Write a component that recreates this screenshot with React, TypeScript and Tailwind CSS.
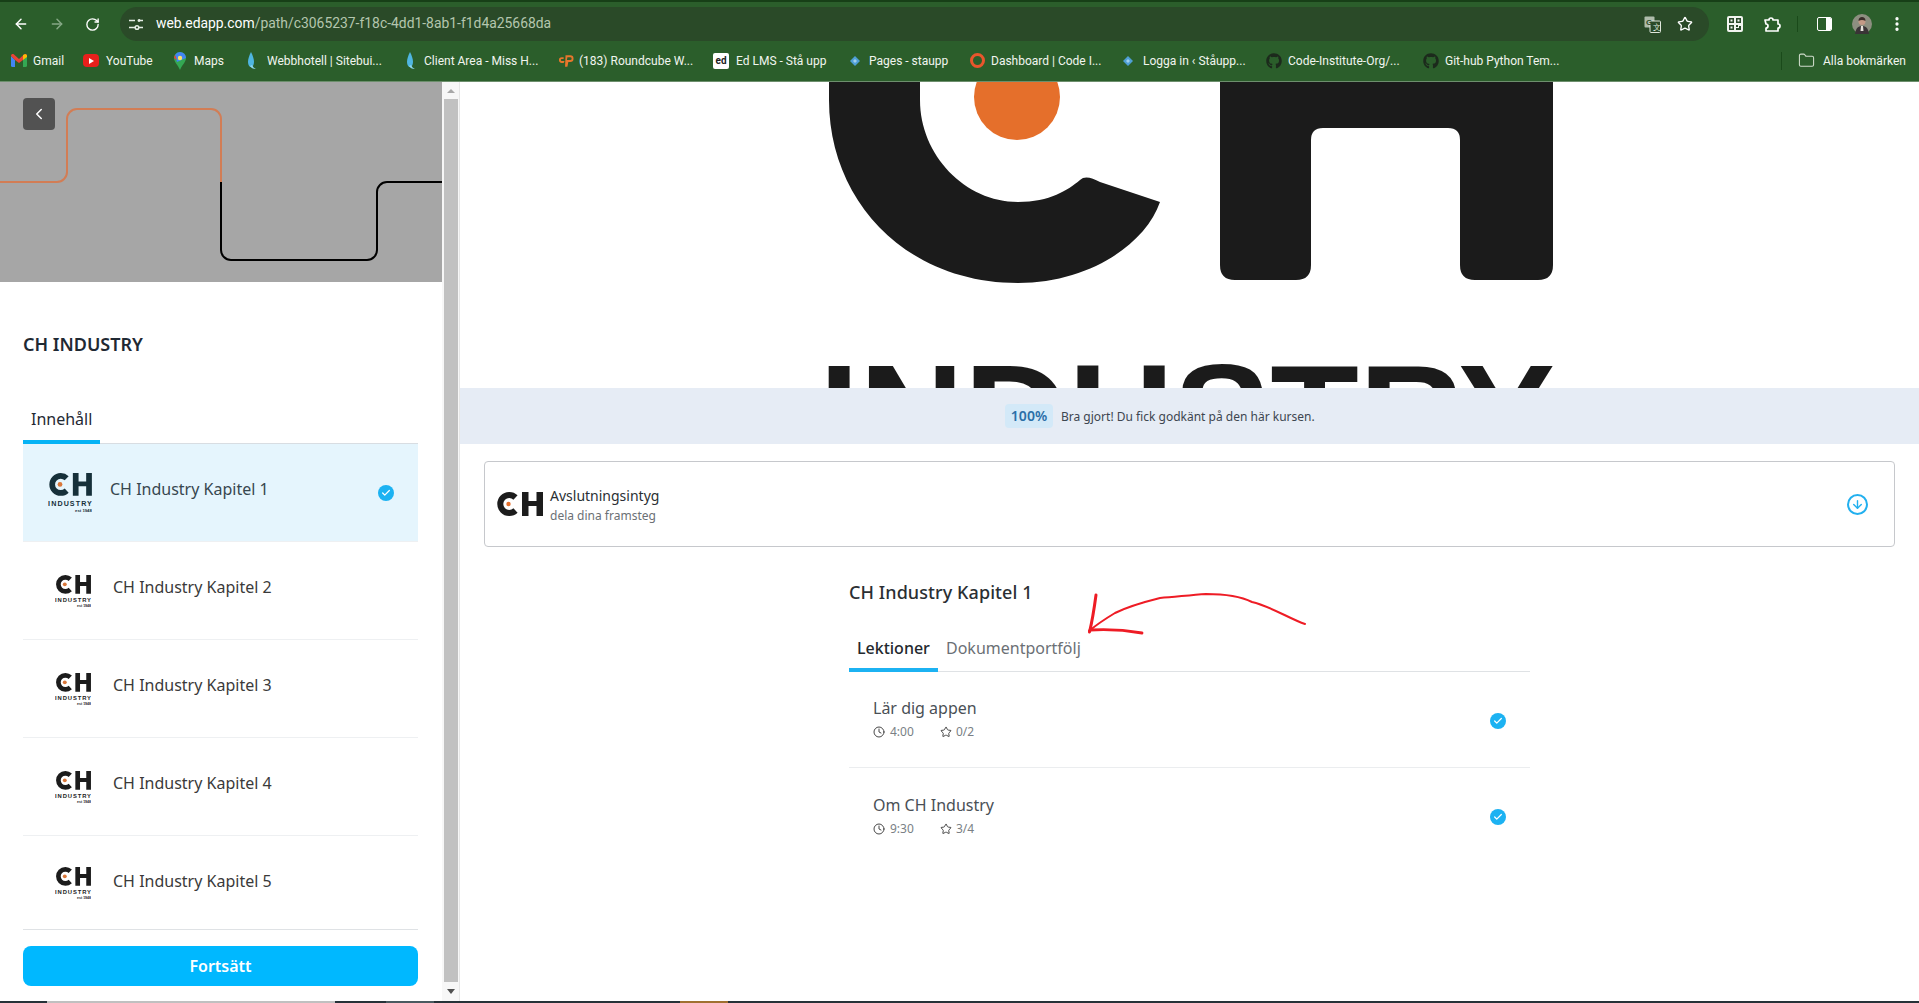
import { ArrowLeft, ArrowRight, RotateCw, Star, ChevronLeft, Clock, Check, ArrowDown, Folder, EllipsisVertical } from "lucide-react";
import { FaGithub } from "react-icons/fa";
import type { ReactNode } from "react";

const font = "[font-family:'Noto_Sans','Open_Sans',sans-serif]";

function Drop() {
  return (
    <svg width="13" height="20" viewBox="0 0 13 20">
      <path d="M6 1C4 5 3 8 3 11c0 3 1.500 5 3 5s3-2 3-5c0-3-1-6-3-10Z" fill="#4fb6e0" />
      <path d="M5 15c1 2 3 3 6 3-2-1-3-2-4-4Z" fill="#8fd6ef" />
    </svg>
  );
}
function Diamond() {
  return (
    <svg width="12" height="12" viewBox="0 0 12 12">
      <path d="M6 1l5 5-5 5-5-5Z" fill="#4f9fd6" />
      <path d="M6 4l2 2-2 2-2-2Z" fill="#9fd0ee" />
    </svg>
  );
}

const bookmarks: { w: string; label: string; gap: string; icon: ReactNode }[] = [
  { w: "w-[72px]", gap: "gap-[6px]", label: "Gmail", icon: (
    <svg width="16" height="13" viewBox="0 0 16 13"><path d="M0 2v9.500A1.500 1.500 0 0 0 1.500 13H4V6Z" fill="#4285f4" /><path d="M16 2v9.500a1.500 1.500 0 0 1-1.500 1.500H12V6Z" fill="#34a853" /><path d="M0 2c0-2 2-2.500 3-1.500L8 5l5-4.500C14-.5 16 0 16 2l-4 4-4 3-4-3Z" fill="#ea4335" /><path d="M12 1v5l4-3V2c0-2-2-2.500-4-1Z" fill="#fbbc04" /></svg>
  ) },
  { w: "w-[89px]", gap: "gap-[7px]", label: "YouTube", icon: (
    <span className="flex h-[13px] w-[16px] items-center justify-center rounded-[4px] bg-[#e8201c]"><span className="h-0 w-0 border-y-[3px] border-l-[5px] border-y-transparent border-l-white" /></span>
  ) },
  { w: "w-[71px]", gap: "gap-[6px]", label: "Maps", icon: (
    <svg width="12" height="18" viewBox="0 0 12 18"><path d="M6 0a6 6 0 0 1 6 6c0 4-4 7-6 12C4 13 0 10 0 6a6 6 0 0 1 6-6Z" fill="#34a853" /><path d="M6 0a6 6 0 0 1 6 6L3 10 1 3a6 6 0 0 1 5-3Z" fill="#4285f4" /><path d="M1 3L3 8 0 6a6 6 0 0 1 1-3Z" fill="#ea4335" /><circle cx="6" cy="6" r="2.200" fill="#fbe26a" /></svg>
  ) },
  { w: "w-[159px]", gap: "gap-[8px]", label: "Webbhotell | Sitebui...", icon: <Drop /> },
  { w: "w-[156px]", gap: "gap-[6px]", label: "Client Area - Miss H...", icon: <Drop /> },
  { w: "w-[155px]", gap: "gap-[5px]", label: "(183) Roundcube W...", icon: (
    <svg width="17" height="14" viewBox="0 0 17 14"><path d="M6 3H4a3 3 0 0 0 0 6h2l1-2H4a1 1 0 0 1 0-2h2ZM8 1h5a3 3 0 0 1 0 7h-2l-1 5H7.500Zm2 2-.5 3H13a1.500 1.500 0 0 0 0-3Z" fill="#e8762c" /></svg>
  ) },
  { w: "w-[134px]", gap: "gap-[7px]", label: "Ed LMS - Stå upp", icon: (
    <span className="flex h-[16px] w-[16px] items-center justify-center rounded-[2px] bg-white text-[10px] leading-none font-bold text-[#222]">ed</span>
  ) },
  { w: "w-[122px]", gap: "gap-[6px]", label: "Pages - staupp", icon: <Diamond /> },
  { w: "w-[151px]", gap: "gap-[6px]", label: "Dashboard | Code I...", icon: <span className="h-[15px] w-[15px] rounded-full border-[3px] border-[#e8562c]" /> },
  { w: "w-[146px]", gap: "gap-[7px]", label: "Logga in ‹ Ståupp...", icon: <Diamond /> },
  { w: "w-[157px]", gap: "gap-[6px]", label: "Code-Institute-Org/...", icon: <FaGithub className="text-[16px] text-[#1c2a1c]" /> },
  { w: "w-[150px]", gap: "gap-[6px]", label: "Git-hub Python Tem...", icon: <FaGithub className="text-[16px] text-[#1c2a1c]" /> },
];

function BrowserChrome() {
  return (
    <div className="flex h-[82px] shrink-0 flex-col bg-[#2b5e2b] [font-family:'Roboto',sans-serif]">
      <div className="h-[2px] bg-[#173f17]" />
      <div className="flex h-[39px] items-end pl-[13px]">
        <div className="mb-0 flex h-[34px] w-[93px] items-center gap-[20px]">
          <ArrowLeft size={16} className="text-white" strokeWidth={2.200} />
          <ArrowRight size={16} className="text-[#86a886]" strokeWidth={2.200} />
          <RotateCw size={15} className="text-white" strokeWidth={2.200} />
        </div>
        <div className="ml-[14px] flex h-[34px] w-[1589px] items-center rounded-full bg-[#2a4a28] pl-[8px] pr-[16px]">
          <svg width="16" height="14" viewBox="0 0 16 14" fill="none" stroke="#e6efe6" strokeWidth="1.500">
            <path d="M1 3.500h6M1 10.500h6M11 10.500h4" />
            <circle cx="11" cy="3.500" r="0.700" />
            <circle cx="9" cy="10.500" r="1.800" />
            <path d="M11 3.500h4" />
          </svg>
          <div className="ml-[12px] flex-1 text-[13.9px] leading-none text-[#b4c6ae]">
            <span className="text-white">web.edapp.com</span>/path/c3065237-f18c-4dd1-8ab1-f1d4a25668da
          </div>
          <svg width="17" height="17" viewBox="0 0 17 17">
            <rect x="0.500" y="0.500" width="10" height="11" rx="1" fill="#aebcab" />
            <rect x="6" y="5" width="10.500" height="11.500" rx="1" fill="#2a4a28" stroke="#dfe7dc" />
            <text x="2" y="9" fontSize="8" fill="#2a4a28" fontFamily="Liberation Sans" fontWeight="700">G</text>
            <text x="8.500" y="14" fontSize="8" fill="#dfe7dc" fontFamily="Liberation Sans">文</text>
          </svg>
          <Star size={16} className="ml-[16px] text-white" strokeWidth={2} />
        </div>
        <div className="ml-[18px] flex h-[34px] flex-1 items-center">
          <svg width="16" height="16" viewBox="0 0 16 16">
            <rect width="16" height="16" rx="2" fill="#f1f4ef" />
            <path d="M2 2h5v5H2Zm1.500 1.500v2h2v-2ZM9 2h5v5H9Zm1.500 1.500v2h2v-2ZM2 9h5v5H2Zm1.500 1.500v2h2v-2ZM9 9h2v2H9Zm3 1h2v4h-5v-2h3Z" fill="#2b4a2b" fillRule="evenodd" />
          </svg>
          <svg width="18" height="18" viewBox="0 0 18 18" fill="none" stroke="#fff" strokeWidth="1.700" className="ml-[20px]">
            <path d="M2 5h4a2 2 0 0 1 4 0h5v4a2 2 0 0 1 0 4v3H3v-3a2 2 0 0 0 0-4Z" strokeLinejoin="round" />
          </svg>
          <span className="ml-[16px] h-[16px] w-px bg-[#1a4a1a]" />
          <span className="ml-[19px] flex h-[14px] w-[15px] overflow-hidden rounded-[2px] border border-white">
            <span className="w-[8px]" />
            <span className="flex-1 bg-white" />
          </span>
          <svg width="20" height="20" viewBox="0 0 20 20" className="ml-[20px]">
            <circle cx="10" cy="10" r="10" fill="#8d8f80" />
            <path d="M3 20c1-6 3-8 7-8s6 2 7 8Z" fill="#3a3436" />
            <path d="M9 12h2l.5 5h-3Z" fill="#e6e2dc" />
            <circle cx="10" cy="7.500" r="3.500" fill="#c49a86" />
            <path d="M6.500 7c0-3 1.500-4 3.500-4s3.500 1 3.500 4c-2-1.500-5-1.500-7 0Z" fill="#3a2c28" />
          </svg>
          <EllipsisVertical size={18} className="ml-[16px] text-white" strokeWidth={2.400} />
        </div>
      </div>
      <div className="flex h-[34px] items-center pl-[11px] pt-[5px]">
        {bookmarks.map((b) => (
          <div key={b.label} className={`flex shrink-0 items-center ${b.w} ${b.gap}`}>
            <span className="flex w-[16px] shrink-0 items-center justify-center">{b.icon}</span>
            <span className="whitespace-nowrap text-[12px] leading-none text-[#f1f5ef]">{b.label}</span>
          </div>
        ))}
        <span className="ml-[208px] h-[18px] w-px shrink-0 bg-[#1a4a1a]" />
        <Folder size={17} className="ml-[16px] shrink-0 text-[#cfdccb]" strokeWidth={1.500} />
        <span className="ml-[8px] whitespace-nowrap text-[12px] leading-none text-[#f1f5ef]">Alla bokmärken</span>
      </div>
      <div className="mt-auto h-[1px] bg-[#6d8f6d]" />
    </div>
  );
}

function SmallLogo({ color, size }: { color: string; size: "lg" | "md" }) {
  const cls = size === "lg" ? "w-[44px] h-[39px]" : "w-[36px] h-[32px]";
  return (
    <svg viewBox="0 0 46 41" className={`${cls} shrink-0`}>
      <path d="M19.500 5.500A9 9 0 1 0 19.500 18.500" fill="none" stroke={color} strokeWidth="6" />
      <circle cx="12.500" cy="12" r="2.500" fill="#d9773a" />
      <path d="M26 0h6v9h8V0h6v24h-6V14h-8v10h-6Z" fill={color} />
      <text x="0" y="34.500" fontSize="7.500" fontWeight="700" textLength="46" fill={color} fontFamily="Liberation Sans">INDUSTRY</text>
      <text x="46" y="40.500" textAnchor="end" fontSize="4.500" fontWeight="700" fill={color} fontFamily="Liberation Sans">est 1948</text>
    </svg>
  );
}

function CheckDot() {
  return (
    <span className="flex h-[16px] w-[16px] shrink-0 items-center justify-center rounded-full bg-[#1cb2f2]">
      <Check size={10} strokeWidth={3} className="text-white" />
    </span>
  );
}

function Sidebar() {
  return (
    <div className="flex w-[460px] shrink-0">
      <div className="flex w-[442px] flex-col bg-white">
        <div className="relative h-[200px] shrink-0 bg-[#a6a6a6] pl-[23px] pt-[16px]">
          <svg width="442" height="200" viewBox="0 82 442 200" className="absolute left-0 top-0" fill="none" strokeWidth="2">
            <path d="M0 182H57a10 10 0 0 0 10-10V119a10 10 0 0 1 10-10H211a10 10 0 0 1 10 10V182" stroke="#d27d55" />
            <path d="M221 182V250a10 10 0 0 0 10 10H367a10 10 0 0 0 10-10V192a10 10 0 0 1 10-10H442" stroke="#000" />
          </svg>
          <div className="relative flex h-[32px] w-[32px] items-center justify-center rounded-[4px] bg-[#525252]">
            <ChevronLeft size={18} className="text-white" strokeWidth={2} />
          </div>
        </div>
        <div className={`flex flex-1 flex-col pl-[23px] pr-[24px] ${font}`}>
          <div className="mt-[49px] text-[18px] leading-[26px] font-semibold text-[#1f2933]">CH INDUSTRY</div>
          <div className="mt-[42px] flex border-b border-[#d8dde2]">
            <div className="-mb-px flex h-[45px] items-start border-b-4 border-[#05b3f5] px-[8px] pt-[8px] text-[16px] leading-[24px] text-[#1f2933]">Innehåll</div>
          </div>
          <div className="flex h-[97px] items-center bg-[#e5f5fd] pl-[25px] pr-[24px]">
            <SmallLogo color="#16303a" size="lg" />
            <span className="ml-[18px] flex-1 pb-[8px] text-[16px] text-[#37474f]">CH Industry Kapitel 1</span>
            <CheckDot />
          </div>
          {[2, 3, 4, 5].map((n) => (
            <div key={n} className={`flex items-center border-t border-[#eef0f2] pl-[32px] ${n === 5 ? "h-[94px]" : "h-[98px]"}`}>
              <SmallLogo color="#1c1c1c" size="md" />
              <span className={`ml-[22px] text-[16px] text-[#3a3a3a] ${n === 5 ? "pb-[3px]" : "pb-[8px]"}`}>CH Industry Kapitel {n}</span>
            </div>
          ))}
          <div className="border-t border-[#dfe2e5] pt-[16px]">
            <div className="flex h-[40px] items-center justify-center rounded-[8px] bg-[#00b8ff] text-[16px] font-semibold text-white">Fortsätt</div>
          </div>
        </div>
      </div>
      <div className="flex w-[18px] flex-col items-center border-r border-[#e6e6e6] bg-[#f7f7f7] pr-px pl-[2px]">
        <div className="flex h-[17px] items-center justify-center">
          <span className="h-0 w-0 border-x-[4px] border-b-[4px] border-x-transparent border-b-[#a8a8a8]" />
        </div>
        <div className="w-full flex-1 bg-[#c1c1c1]" />
        <div className="flex h-[19px] items-center justify-center">
          <span className="h-0 w-0 border-x-[4px] border-t-[5px] border-x-transparent border-t-[#505050]" />
        </div>
      </div>
    </div>
  );
}

function Meta({ time, score }: { time: string; score: string }) {
  return (
    <div className="mt-[4px] flex items-center text-[12px] leading-[16px] text-[#7a7f85]">
      <Clock size={12} strokeWidth={1.800} className="text-[#333]" />
      <span className="ml-[5px] w-[48px]">{time}</span>
      <Star size={12} strokeWidth={1.800} className="ml-[2px] text-[#333]" />
      <span className="ml-[4px]">{score}</span>
    </div>
  );
}

function Main() {
  return (
    <div className={`relative flex flex-1 flex-col bg-white ${font}`}>
      <div className="h-[306px] shrink-0 overflow-hidden">
        <svg width="1459" height="306" viewBox="460 82 1459 306">
          <path d="M829 82V100C829 200 905 283 1018 283C1088 283 1145 245 1160 202L1100 182C1092 178 1085 175 1080 180C1068 190 1050 202 1018 202C965 202 920 155 920 100V82Z" fill="#1b1b1b" />
          <ellipse cx="1017" cy="97" rx="43" ry="43" fill="#e56f2b" />
          <path d="M1220 82H1553V265Q1553 280 1538 280H1475Q1460 280 1460 265V140Q1460 128 1448 128H1323Q1311 128 1311 140V265Q1311 280 1296 280H1235Q1220 280 1220 265Z" fill="#1b1b1b" />
          <text x="819" y="462" fontSize="140" fontWeight="700" fill="#1b1b1b" fontFamily="Liberation Sans" textLength="736" lengthAdjust="spacingAndGlyphs">INDUSTRY</text>
        </svg>
      </div>
      <div className="flex h-[56px] shrink-0 items-center bg-[#e6ecf5] pl-[545px]">
        <span className="flex h-[24px] w-[48px] items-center justify-center rounded-[4px] bg-[#d3e9f8] pb-[2px] text-[14px] font-semibold text-[#2a6fa8]">100%</span>
        <span className="ml-[8px] pt-[2px] text-[12px] text-[#3d4650]">Bra gjort! Du fick godkänt på den här kursen.</span>
      </div>
      <div className="mx-[24px] mt-[17px] flex h-[86px] shrink-0 items-center rounded-[4px] border border-[#c6c8cc] pl-[11px] pr-[26px]">
        <svg viewBox="0 0 47 24" className="h-[24px] w-[47px] shrink-0">
          <path d="M19.500 5.500A9 9 0 1 0 19.500 18.500" fill="none" stroke="#1c1c1c" strokeWidth="6" />
          <circle cx="12.500" cy="12" r="2.200" fill="#e56f2b" />
          <path d="M26 0h6.500v9h8V0H47v24h-6.500V14h-8v10H26Z" fill="#1c1c1c" />
        </svg>
        <div className="ml-[7px] flex-1 pt-[2px]">
          <div className="text-[14px] leading-[20px] text-[#2b2f33]">Avslutningsintyg</div>
          <div className="text-[12px] leading-[19px] text-[#6b7075]">dela dina framsteg</div>
        </div>
        <span className="flex h-[21px] w-[21px] items-center justify-center rounded-full border-2 border-[#22b0ef]">
          <ArrowDown size={13} strokeWidth={2.600} className="text-[#22b0ef]" />
        </span>
      </div>
      <div className="ml-[389px] w-[681px]">
        <div className="mt-[32px] text-[18px] leading-[26px] font-medium tracking-[0.08px] text-[#2b2f33]">CH Industry Kapitel 1</div>
        <div className="mt-[26px] flex border-b border-[#dfe2e5] text-[16px] leading-[24px]">
          <div className="-mb-px h-[41px] w-[89px] border-b-4 border-[#1cb2f2] px-[8px] pt-[5px] font-medium text-[#23282d]">Lektioner</div>
          <div className="ml-[8px] pt-[5px] text-[#6b7075]">Dokumentportfölj</div>
        </div>
        <div className="flex h-[96px] items-center border-b border-[#ebedef] pl-[24px] pr-[24px]">
          <div className="flex-1 pb-[3px]">
            <div className="text-[16px] leading-[24px] text-[#4a5056]">Lär dig appen</div>
            <Meta time="4:00" score="0/2" />
          </div>
          <span className="pt-[2px]"><CheckDot /></span>
        </div>
        <div className="flex h-[96px] items-center pl-[24px] pr-[24px]">
          <div className="flex-1 pb-[3px]">
            <div className="text-[16px] leading-[24px] text-[#4a5056]">Om CH Industry</div>
            <Meta time="9:30" score="3/4" />
          </div>
          <span className="pt-[2px]"><CheckDot /></span>
        </div>
      </div>
      <svg width="240" height="60" viewBox="1080 585 240 60" fill="none" stroke="#ee1c25" strokeLinecap="round" strokeLinejoin="round" className="absolute left-[620px] top-[503px]">
        <path d="M1305 624C1290 619 1270 606 1252 602C1240 596 1222 594 1206 594C1190 595 1175 597 1160 598C1140 603 1125 608 1115 613C1105 619 1095 626 1089 631" strokeWidth="2" />
        <path d="M1096 595C1094 610 1092 622 1089.500 632" strokeWidth="3" />
        <path d="M1090 630C1106 629 1125 630 1142 633" strokeWidth="2.800" />
      </svg>
    </div>
  );
}

export default function App() {
  return (
    <div className="flex h-screen w-full flex-col overflow-hidden bg-white">
      <BrowserChrome />
      <div className="flex min-h-0 flex-1">
        <Sidebar />
        <Main />
      </div>
      <div className="flex h-[2px] shrink-0 bg-[#263238]">
        <div className="ml-[47px] w-[288px] bg-[#c0c0c0]" />
        <div className="ml-[51px] w-[48px] bg-[#4a5a60]" />
        <div className="ml-[246px] w-[48px] bg-[#a07030]" />
      </div>
    </div>
  );
}
